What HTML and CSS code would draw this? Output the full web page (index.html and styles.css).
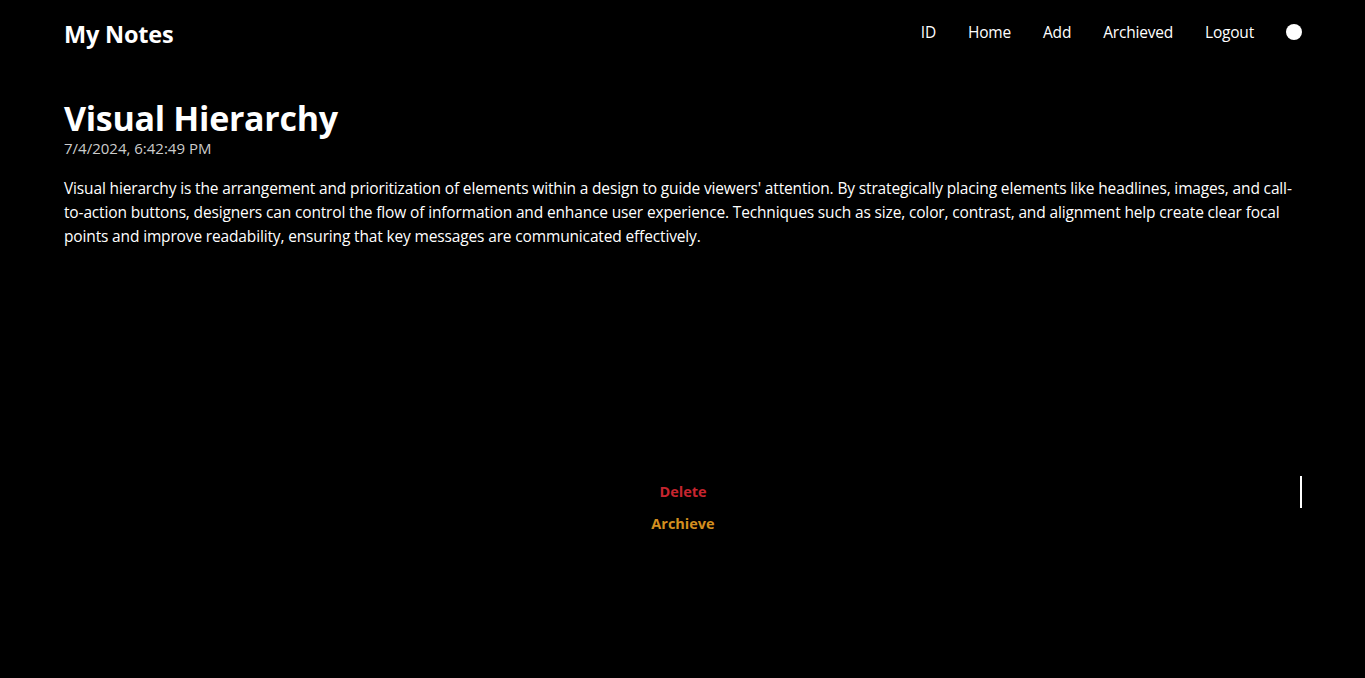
FILE: index.html
```html
<!DOCTYPE html>
<html lang="en">
<head>
<meta charset="utf-8">
<title>My Notes</title>
<link rel="stylesheet" href="styles.css">
</head>
<body>
<div class="app">
  <header class="header">
    <h1 class="brand">My Notes</h1>
    <nav class="nav">
      <a href="#">ID</a>
      <a href="#">Home</a>
      <a href="#">Add</a>
      <a href="#">Archieved</a>
      <a href="#">Logout</a>
      <span class="theme-dot"></span>
    </nav>
  </header>
  <main class="main">
    <section class="detail">
      <h2 class="title">Visual Hierarchy</h2>
      <p class="date">7/4/2024, 6:42:49 PM</p>
      <p class="body">Visual hierarchy is the arrangement and prioritization of elements within a design to guide viewers' attention. By strategically placing elements like headlines, images, and call-to-action buttons, designers can control the flow of information and enhance user experience. Techniques such as size, color, contrast, and alignment help create clear focal points and improve readability, ensuring that key messages are communicated effectively.</p>
    </section>
    <div class="actions">
      <span class="caret"></span>
      <button class="btn delete">Delete</button>
      <button class="btn archive">Archieve</button>
    </div>
  </main>
</div>
</body>
</html>
```
FILE: styles.css
```css
* { box-sizing: border-box; }
html, body {
  margin: 0;
  background: #000;
  color: #fff;
  font-family: "Open Sans", "Noto Sans", sans-serif;
  min-height: 100%;
}
.app {
  padding: 0 63px 0 64px;
}
.header {
  display: flex;
  align-items: center;
  justify-content: space-between;
  height: 68px;
}
.brand {
  margin: 0;
  font-size: 23.5px;
  font-weight: 700;
  letter-spacing: -0.2px;
}
.nav {
  display: flex;
  align-items: center;
  gap: 32px;
  padding-bottom: 4px;
}
.nav a {
  color: #fff;
  text-decoration: none;
  font-size: 15.5px;
  letter-spacing: -0.2px;
}
.theme-dot {
  width: 16px;
  height: 16px;
  border-radius: 50%;
  background: #fff;
}
.main {
  display: flex;
  flex-direction: column;
}
.detail {
  padding-top: 30px;
}
.title {
  margin: 0;
  font-size: 34px;
  line-height: 40px;
  font-weight: 700;
  letter-spacing: -0.3px;
}
.date {
  margin: 0;
  font-size: 15px;
  line-height: 20px;
  color: #ccc;
}
.body {
  margin: 18px 0 0;
  font-size: 15.5px;
  line-height: 24px;
  letter-spacing: -0.15px;
}
.actions {
  position: relative;
  display: flex;
  flex-direction: column;
  align-items: center;
  gap: 10px;
  margin-top: 233px;
}
.btn {
  background: none;
  border: none;
  padding: 0;
  font-family: inherit;
  font-size: 14.5px;
  font-weight: 700;
  line-height: 22px;
  cursor: pointer;
}
.delete { color: #c7252f; }
.archive { color: #d48f1f; }
.caret {
  position: absolute;
  right: 0;
  top: -5px;
  width: 2px;
  height: 32px;
  background: #fff;
}
```
